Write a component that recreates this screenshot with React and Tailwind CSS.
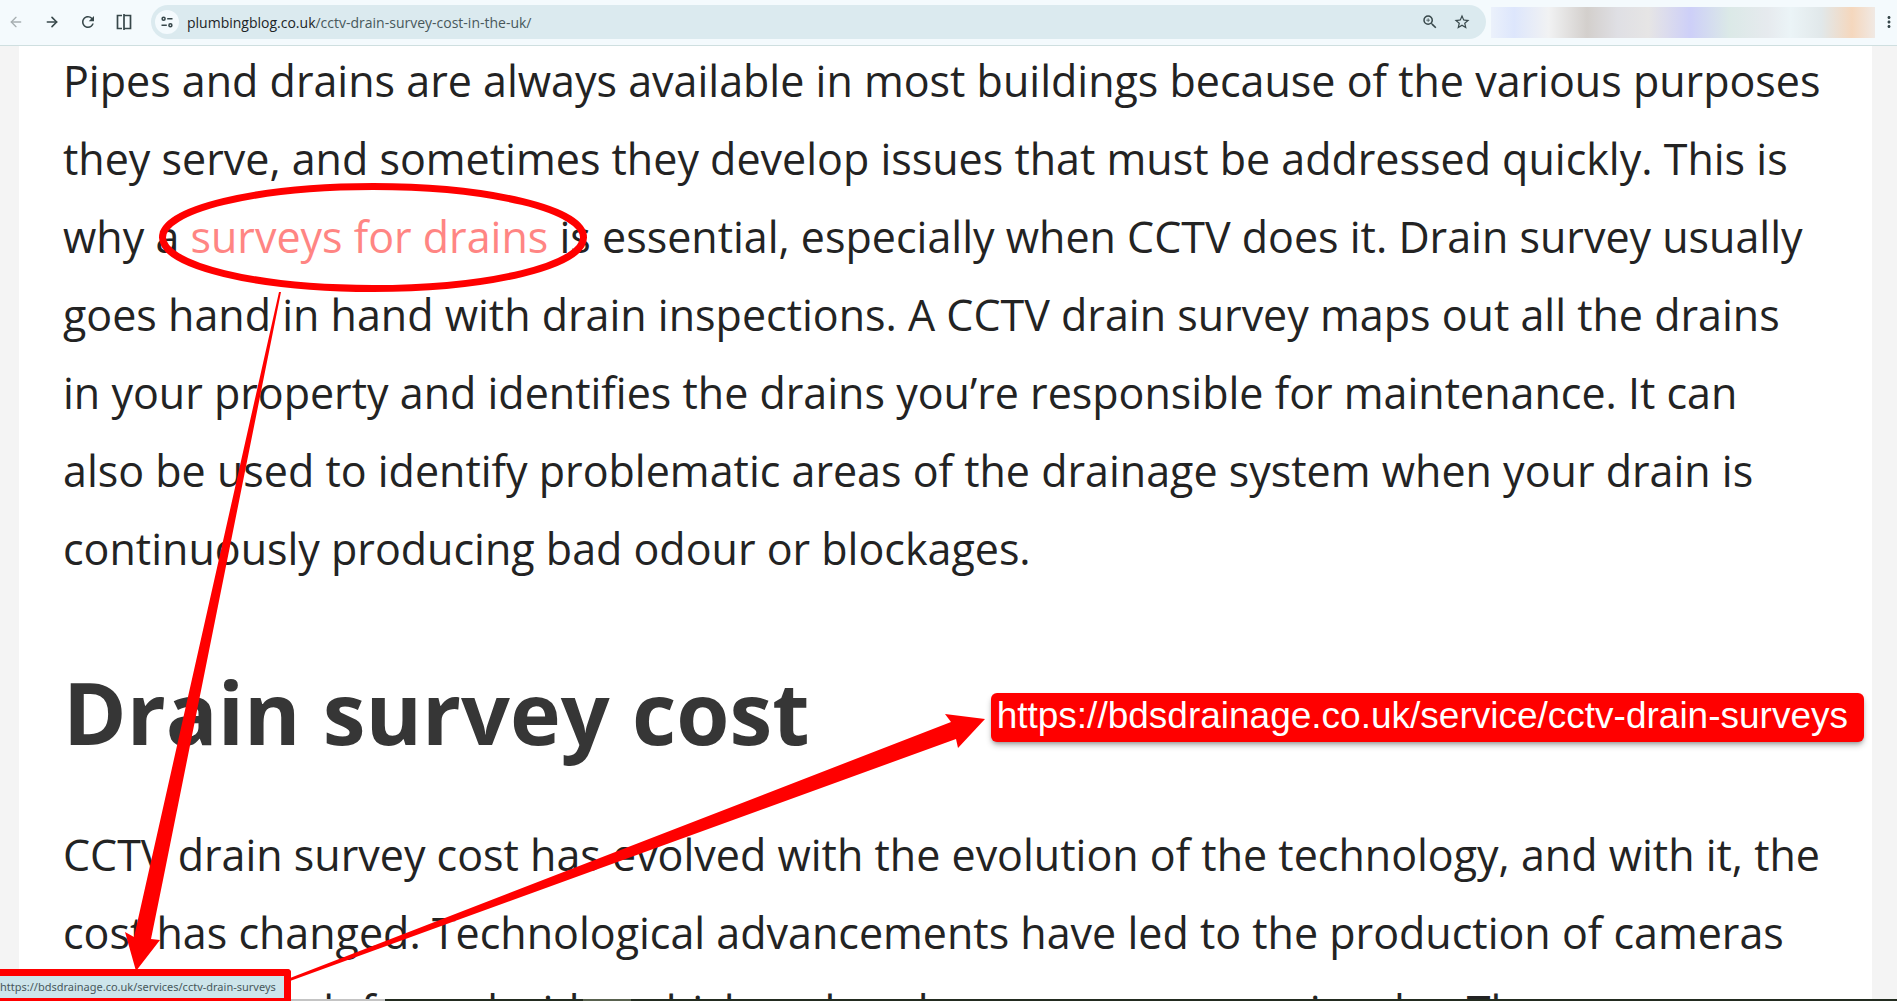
import { ArrowLeft, ArrowRight } from 'lucide-react'
import { MdRefresh, MdStarBorder, MdOutlineZoomIn, MdMoreVert } from 'react-icons/md'

const NavButton = ({ label, size = 'h-6 w-6', className = '', children }) => (
  <button type="button" aria-label={label} className={`flex shrink-0 items-center justify-center ${size} ${className}`}>
    {children}
  </button>
)

// Two panes split by a taller divider
const SplitIcon = () => (
  <svg width="16" height="18" viewBox="0 0 16 18" fill="none" stroke="currentColor" strokeWidth="1.7">
    <path d="M6 2.5H1.5v13H6M8 1v16M8 2.5h6.5v13H8" />
  </svg>
)

const TuneIcon = () => (
  <svg width="12" height="12" viewBox="0 0 12 12" fill="none" stroke="currentColor" strokeWidth="1.5">
    <circle cx="2.6" cy="2.8" r="1.5" />
    <path d="M6.2 2.8H11.5M0.5 9.2H5.8" />
    <circle cx="9.4" cy="9.2" r="1.5" />
  </svg>
)

const Toolbar = () => (
  <header className="relative z-20 flex h-[46px] shrink-0 items-center border-b border-[#cfdfe0] bg-[#f4fafd] pb-px text-[#37474a]">
    <nav className="flex w-[151px] shrink-0 items-center gap-3 pl-1">
      <NavButton label="Back" className="text-[#a7afb1]"><ArrowLeft size={16} strokeWidth={2} /></NavButton>
      <NavButton label="Forward"><ArrowRight size={16} strokeWidth={2.4} /></NavButton>
      <NavButton label="Reload"><MdRefresh size={18} /></NavButton>
      <NavButton label="Split view"><SplitIcon /></NavButton>
    </nav>
    <div className="mr-[5px] flex h-[34px] min-w-0 flex-1 items-center rounded-full bg-[#dbeaef] pr-3 pl-1">
      <NavButton label="Site information" className="rounded-full bg-[#f4fafd]">
        <TuneIcon />
      </NavButton>
      <a href="#top" className="ml-2 flex-1 truncate font-['Open_Sans',sans-serif] text-[14px] text-[#48585b]">
        <span className="text-[#1b2426]">plumbingblog.co.uk</span>/cctv-drain-survey-cost-in-the-uk/
      </a>
      <div className="flex gap-2">
        <NavButton label="Zoom"><MdOutlineZoomIn size={18} /></NavButton>
        <NavButton label="Bookmark"><MdStarBorder size={18} /></NavButton>
      </div>
    </div>
    <div className="h-[31px] w-[384px] shrink-0 bg-[linear-gradient(90deg,#ebf1fb_0%,#dde6fc_6%,#f1f2f3_15%,#d3cfcc_25%,#dfdfe4_33%,#e6e5e5_41%,#cdcff8_52%,#dbe9e7_62%,#e6eaee_72%,#ebf4f7_78%,#e1e8ea_86%,#f5d7bd_94%,#f0e9e4_100%)]" />
    <NavButton label="Menu" size="h-6 w-3" className="mr-0.5 ml-2">
      <MdMoreVert size={18} className="shrink-0" />
    </NavButton>
  </header>
)

// Circle and arrows drawn over the page
const Annotations = () => (
  <svg
    width="1897"
    height="1001"
    viewBox="0 0 1897 1001"
    className="pointer-events-none absolute top-0 left-0 z-10"
    aria-hidden="true"
  >
    <ellipse cx="373" cy="237.5" rx="210.5" ry="51" fill="none" stroke="#f00" strokeWidth="7" />
    <path fill="#f00" d="M279 292L281 292L163 880L151 939L160 940L136 971L125 932L134 937Z" />
    <path fill="#f00" d="M290 978L951 722L945 714L985 719L958 748L956 739L290 981Z" />
  </svg>
)

export default function App() {
  return (
    <div id="top" className="relative flex h-screen flex-col overflow-hidden bg-[#f4f4f4]">
      <Toolbar />
      <main className="mr-[25px] ml-[19px] min-h-0 flex-1 overflow-hidden bg-white px-11 font-['Open_Sans',sans-serif] text-[43px] leading-[78px] text-[#232323]">
        <p className="-mt-1">
          Pipes and drains are always available in most buildings because of the various purposes
          they serve, and sometimes they develop issues that must be addressed quickly. This is
          why a <a href="#surveys" className="text-[#ff8583]">surveys for drains</a> is essential,
          especially when CCTV does it. Drain survey usually goes hand in hand with drain
          inspections. A CCTV drain survey maps out all the drains in your property and identifies
          the drains you’re responsible for maintenance. It can also be used to identify
          problematic areas of the drainage system when your drain is continuously producing bad
          odour or blockages.
        </p>
        <h2 className="mt-15 text-[86px] leading-[128px] font-bold text-[#363636]">Drain survey cost</h2>
        <p className="mt-10">
          CCTV drain survey cost has evolved with the evolution of the technology, and with it, the
          cost has changed. Technological advancements have led to the production of cameras that
          can reach for red wider which on lens because cameras wires be. The
        </p>
      </main>
      <Annotations />
      <div className="absolute top-[693px] right-[33px] z-20 rounded-md bg-[#f00] pt-px pr-4 pb-[5px] pl-1.5 shadow-md shadow-black/30">
        <a href="#survey-page" className="block font-['Liberation_Sans',sans-serif] text-[37px] leading-[43px] text-white">
          https://bdsdrainage.co.uk/service/cctv-drain-surveys
        </a>
      </div>
      <div className="absolute right-0 bottom-0 left-0 z-20 flex items-end">
        <div className="w-[291px] rounded-tr border-t-[7px] border-r-[7px] border-b-[3px] border-[#f00] bg-[#cde5eb] font-['Noto_Sans',sans-serif] text-[11px] leading-[22px] whitespace-nowrap text-[#48585b]">
          https://bdsdrainage.co.uk/services/cctv-drain-surveys
        </div>
        <div className="h-0.5 w-[94px] bg-[#c4c4c4]" />
        <div className="h-0.5 w-[198px] bg-[#232c20]" />
        <div className="h-0.5 w-12 bg-[#59624f]" />
        <div className="h-0.5 flex-1 bg-[#232c20]" />
      </div>
    </div>
  )
}
